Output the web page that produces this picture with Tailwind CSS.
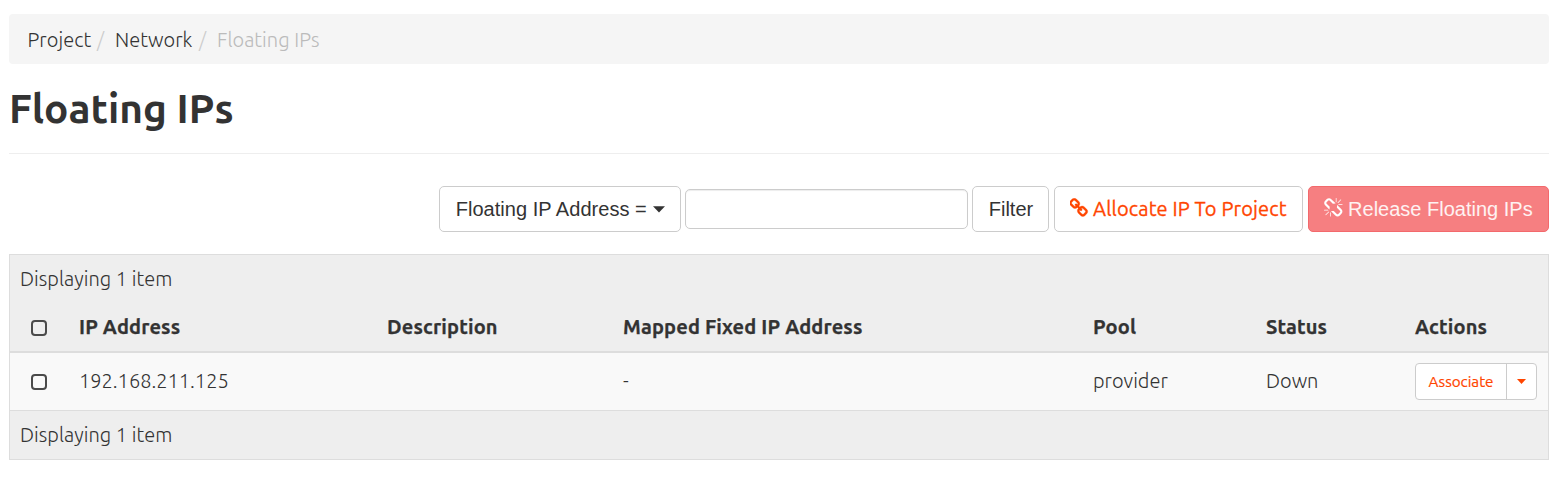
<!DOCTYPE html>
<html lang="en">
<head>
<meta charset="utf-8">
<title>Floating IPs</title>
<script src="https://cdn.jsdelivr.net/npm/@tailwindcss/browser@4"></script>
</head>
<body class="bg-white px-[9px] pt-3.5 pr-[18px] font-['Ubuntu','Noto_Sans',sans-serif] text-[20px] font-light leading-7 text-[#333] whitespace-nowrap">
  <nav class="flex h-[50px] items-center rounded bg-[#f5f5f5] pl-[18px] pt-0.5 tracking-[0.04px]">
    <a class="w-[70px] pl-[0.5px]">Project</a><span class="w-[18px] text-[#ccc]">/</span>
    <a class="w-[84px]">Network</a><span class="w-[18px] text-[#ccc]">/</span>
    <span class="text-[#bbb]">Floating IPs</span>
  </nav>
  <h1 class="flex h-[90px] items-center border-b border-[#eee] pb-0.5 text-[40.600px] font-bold">Floating IPs</h1>

  <div class="mt-8 flex h-[46px] justify-end gap-[5px] font-['Liberation_Sans',sans-serif] text-[20px] font-normal">
    <button class="-mr-px flex w-[242px] items-center gap-[5px] rounded-[5px] border border-[#ccc] pl-[15px]"><span class="w-[192.5px] tracking-[0.04px]">Floating IP Address =</span><svg class="h-[7px] w-3" viewBox="0 0 12 7"><path d="M0 .3h12L6 6.6z" fill="#333"/></svg></button>
    <div class="mt-[3px] -mr-px h-10 w-[283px] rounded-[5px] border border-[#ccc] shadow-[inset_0_1px_1px_rgba(0,0,0,0.075)]"></div>
    <button class="w-[77px] rounded-[5px] border border-[#ccc] pl-px">Filter</button>
    <button class="flex w-[249px] items-center gap-[4.5px] rounded-[5px] border border-[#ccc] pl-[15px] font-['Ubuntu','Noto_Sans',sans-serif] text-[20px] tracking-[0.14px] text-[#ff4500] [-webkit-text-stroke:0.3px]"><svg class="h-5 w-[18.6px] -mt-0.5" viewBox="64 0 1664 1792" fill="currentColor" stroke="currentColor" stroke-width="30"><path d="M1456 1216q0-40-28-68l-208-208q-28-28-68-28-42 0-72 32 3 3 19 18.5t21.5 21.5 15 19 13 25.5 3.5 27.5q0 40-28 68t-68 28q-15 0-27.5-3.5t-25.5-13-19-15-21.5-21.5-18.5-19q-33 31-33 73 0 40 28 68l206 207q27 27 68 27 40 0 68-26l147-146q28-28 28-67zm-703-705q0-40-28-68l-206-207q-28-28-68-28-39 0-68 27l-147 146q-28 28-28 67 0 40 28 68l208 208q27 27 68 27 42 0 72-31-3-3-19-18.5t-21.5-21.5-15-19-13-25.5-3.5-27.5q0-40 28-68t68-28q15 0 27.5 3.5t25.5 13 19 15 21.5 21.5 18.5 19q33-31 33-73zm895 705q0 120-85 203l-147 146q-83 83-203 83-121 0-204-85l-206-207q-83-83-83-203 0-123 88-209l-88-88q-86 88-208 88-120 0-204-84l-208-208q-84-84-84-204t85-203l147-146q83-83 203-83 121 0 204 85l206 207q83 83 83 203 0 123-88 209l88 88q86-88 208-88 120 0 204 84l208 208q84 84 84 204z"/></svg><span>Allocate IP To Project</span></button>
    <button class="flex w-[241px] items-center gap-[5.5px] rounded-[5px] border border-[#f3696c] bg-[#f67f81] pl-[15px] text-white/90"><svg class="h-5 w-[18.6px] -mt-0.5 text-white" viewBox="64 0 1664 1792" fill="currentColor"><path d="M503 1271l-256 256q-10 9-23 9-12 0-23-9-9-10-9-23t9-23l256-256q10-9 23-9t23 9q9 10 9 23t-9 23zm169 41v320q0 14-9 23t-23 9-23-9-9-23v-320q0-14 9-23t23-9 23 9 9 23zm-224-224q0 14-9 23t-23 9h-320q-14 0-23-9t-9-23 9-23 23-9h320q14 0 23 9t9 23zm1264 128q0 120-85 203l-147 146q-83 83-203 83-121 0-204-85l-334-335q-21-21-42-56l239-18 273 274q28 28 68 28.5t68-27.5l147-146q28-28 28-67 0-40-28-68l-274-275 18-239q35 21 56 42l336 336q84 86 84 204zm-617-724l-239 18-273-274q-28-28-68-28-39 0-68 27l-147 146q-28 28-28 67 0 40 28 68l274 274-18 240q-35-21-56-42l-336-336q-84-86-84-204 0-120 85-203l147-146q83-83 203-83 121 0 204 85l334 335q21 21 42 56zm633 84q0 14-9 23t-23 9h-320q-14 0-23-9t-9-23 9-23 23-9h320q14 0 23 9t9 23zm-544-544v320q0 14-9 23t-23 9-23-9-9-23v-320q0-14 9-23t23-9 23 9 9 23zm407 151l-256 256q-11 9-23 9t-23-9q-9-10-9-23t9-23l256-256q10-9 23-9t23 9q9 10 9 23t-9 23z"/></svg><span>Release Floating IPs</span></button>
  </div>

  <div class="mt-[22px] border border-[#ddd] bg-[#eee]">
    <div class="flex h-12 items-center pl-2.5 tracking-[0.04px]">Displaying 1 item</div>
    <div class="grid h-[50px] grid-cols-[69px_308px_236px_470px_173px_149px_1fr] items-center border-b-2 border-[#ddd] pb-px font-bold tracking-[0.15px] [-webkit-text-stroke:0.25px]">
      <span class="ml-[21px] mt-[3px] size-4 rounded-[4px] border-2 border-[#4a4a4a]"></span>
      <span>IP Address</span><span>Description</span><span>Mapped Fixed IP Address</span><span>Pool</span><span>Status</span><span>Actions</span>
    </div>
    <div class="grid h-[58px] grid-cols-[69px_308px_236px_470px_173px_149px_1fr] items-center border-b border-[#ddd] bg-[#f9f9f9]">
      <span class="ml-[21px] mt-px size-4 rounded-[4px] border-2 border-[#4a4a4a]"></span>
      <span class="pb-0.5">192.168.211.125</span><span></span><span class="pb-0.5">-</span><span class="pb-0.5">provider</span><span class="pb-0.5">Down</span>
      <div class="flex h-[37px] w-[122px] rounded border border-[#ccc] bg-white text-[15.200px] font-normal text-[#ff4500] [-webkit-text-stroke:0.2px]">
        <span class="flex w-[91px] items-center justify-center border-r border-[#ccc]">Associate</span>
        <span class="flex flex-1 items-center justify-center"><svg class="h-[5px] w-[9px]" viewBox="0 0 9 5"><path d="M0 0h9L4.500 5z" fill="#ff4500"/></svg></span>
      </div>
    </div>
    <div class="flex h-12 items-center pl-2.5 tracking-[0.04px]">Displaying 1 item</div>
  </div>
</body>
</html>
